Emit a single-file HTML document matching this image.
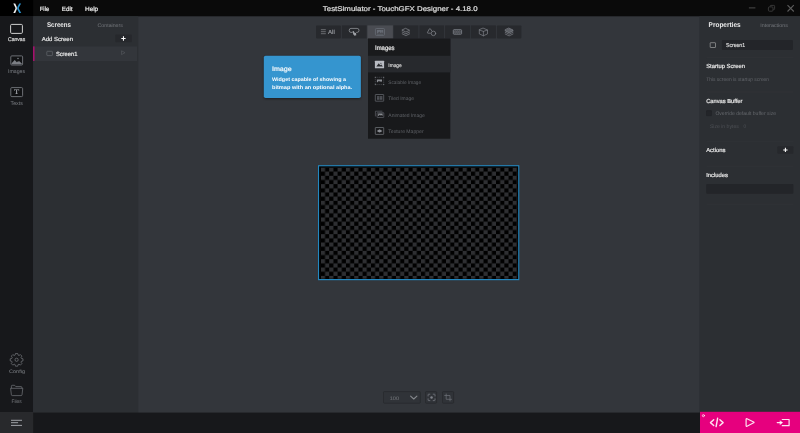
<!DOCTYPE html>
<html>
<head>
<meta charset="utf-8">
<title>TestSimulator - TouchGFX Designer - 4.18.0</title>
<style>
html,body{margin:0;padding:0;background:#33363b;}
body{width:800px;height:433px;overflow:hidden;position:relative;}
svg{position:absolute;left:0;top:0;display:block;opacity:0.999;}
text{font-family:"Liberation Sans",sans-serif;text-rendering:geometricPrecision;}
.b{font-weight:bold;}
</style>
</head>
<body>
<svg width="800" height="433" viewBox="0 0 800 433">
<defs>
<pattern id="chk" patternUnits="userSpaceOnUse" x="320.88" y="167.45" width="8.34" height="8.34">
<rect x="0" y="0" width="8.34" height="8.34" fill="#000"/>
<rect x="0" y="0" width="4.17" height="4.17" fill="#2e2f32"/>
<rect x="4.17" y="4.17" width="4.17" height="4.17" fill="#2e2f32"/>
</pattern>
<filter id="sh" x="-10%" y="-20%" width="120%" height="150%"><feGaussianBlur stdDeviation="1.2"/></filter>
</defs>

<!-- ===== base panels ===== -->
<g id="panels">
<rect x="0" y="0" width="800" height="433" fill="#33363b"/>
<rect x="0" y="0" width="800" height="16.3" fill="#0a0a0a"/>
<rect x="0" y="0" width="33.2" height="16.3" fill="#000"/>
<rect x="0" y="16.3" width="33.2" height="397" fill="#17181b"/>
<rect x="33.2" y="16.3" width="105.1" height="397" fill="#2c2f33"/>
<rect x="699.35" y="16.3" width="100.65" height="397" fill="#2c2f33"/>
<rect x="0" y="412.6" width="800" height="20.4" fill="#17181b"/>
<rect x="0" y="412" width="33.2" height="21" fill="#28292c"/>
<rect x="700" y="411.8" width="100" height="21.2" fill="#e6007e"/>
</g>

<!-- SECTION: titlebar -->
<g id="titlebar">
<path d="M13.3 3.5 L15.2 3.5 L16.6 6.6 Q16.9 7.4 16.9 8.2 Q16.9 9 16.6 9.8 L15.2 12.9 L13.3 12.9 L15.3 8.9 Q15.6 8.2 15.3 7.5 Z" fill="#f2f2f2"/>
<path d="M19.2 3.5 L21.1 3.5 L18.9 7.6 Q18.6 8.2 18.9 8.8 L21.2 12.9 L19.3 12.9 L17.3 9.2 Q16.8 8.2 17.3 7.2 Z" fill="#2b93cf"/>
<text stroke="#e4e4e4" stroke-width="0.22" x="39.8" y="10.75" font-size="6.2" fill="#e4e4e4" textLength="9.4" lengthAdjust="spacingAndGlyphs">File</text>
<text stroke="#e4e4e4" stroke-width="0.22" x="61.8" y="10.75" font-size="6.2" fill="#e4e4e4" textLength="10.7" lengthAdjust="spacingAndGlyphs">Edit</text>
<text stroke="#e4e4e4" stroke-width="0.22" x="85" y="10.75" font-size="6.2" fill="#e4e4e4" textLength="13.2" lengthAdjust="spacingAndGlyphs">Help</text>
<text stroke="#dcdcdc" stroke-width="0.22" x="322.8" y="11.05" font-size="6.9" fill="#dcdcdc" textLength="154.8" lengthAdjust="spacingAndGlyphs">TestSimulator - TouchGFX Designer - 4.18.0</text>
<path d="M748.9 7.9 H755.4" stroke="#4c4c4c" stroke-width="1" fill="none"/>
<rect x="768.4" y="6.9" width="4.6" height="4.3" rx="1" fill="none" stroke="#3e3e3e" stroke-width="0.85"/>
<path d="M770.2 6.7 V6.2 Q770.2 5.4 771 5.4 H773.8 Q774.6 5.4 774.6 6.2 V8.8 Q774.6 9.6 773.8 9.6 H773.3" fill="none" stroke="#3e3e3e" stroke-width="0.85"/>
<path d="M787.5 5.2 L793.8 11.5 M793.8 5.2 L787.5 11.5" stroke="#5c5c5c" stroke-width="1.1" fill="none"/>
</g>
<!-- SECTION: sidebar -->
<g id="sidebar">
<rect x="10.6" y="24.4" width="11.8" height="9" rx="1.1" fill="none" stroke="#cfcfcf" stroke-width="1"/>
<text stroke="#d4d4d4" stroke-width="0.22" x="8.1" y="40.9" font-size="5.4" fill="#d4d4d4" textLength="17.1" lengthAdjust="spacingAndGlyphs">Canvas</text>

<rect x="10.8" y="55.9" width="11.8" height="9.1" rx="1" fill="#111214" stroke="#7b7e84" stroke-width="0.85"/>
<path d="M11.6 64.2 L11.6 63.2 L14.7 59.9 L16.9 62.3 L17.6 61.6 L19.4 61.2 L21.8 63.4 L21.8 64.2 Z" fill="#7b7e84"/>
<circle cx="18" cy="58.5" r="0.8" fill="#7b7e84"/>
<text x="8" y="72.8" font-size="5.4" fill="#7b7e84" textLength="17" lengthAdjust="spacingAndGlyphs">Images</text>

<rect x="10.8" y="87.6" width="11.8" height="9" rx="1" fill="#111214" stroke="#7b7e84" stroke-width="0.85"/>
<text x="14.1" y="94.25" font-size="6.8" fill="#a4a7ac" stroke="#a4a7ac" stroke-width="0.15" style="font-family:'Liberation Serif',serif" textLength="5.2" lengthAdjust="spacingAndGlyphs">T</text>
<text x="10.5" y="104.8" font-size="5.4" fill="#7b7e84" textLength="12.4" lengthAdjust="spacingAndGlyphs">Texts</text>

<g fill="none" stroke="#85888d" stroke-width="0.6">
<circle cx="16.6" cy="359.8" r="1.6"/>
<path id="gear" d="M15.5 353.5 L17.7 353.5 L18.1 355.1 L19 355.5 L20.4 354.6 L21.9 356.1 L21 357.5 L21.4 358.4 L23 358.8 L23 360.9 L21.4 361.3 L21 362.2 L21.9 363.6 L20.4 365.1 L19 364.2 L18.1 364.6 L17.7 366.2 L15.5 366.2 L15.1 364.6 L14.2 364.2 L12.8 365.1 L11.3 363.6 L12.2 362.2 L11.8 361.3 L10.2 360.9 L10.2 358.8 L11.8 358.4 L12.2 357.5 L11.3 356.1 L12.8 354.6 L14.2 355.5 L15.1 355.100 Z" stroke-linejoin="round"/>
</g>
<text x="9" y="373.4" font-size="5" fill="#7e8186" textLength="16" lengthAdjust="spacingAndGlyphs">Config</text>

<g fill="none" stroke="#85888d" stroke-width="0.6" stroke-linejoin="round">
<path d="M11.4 388.3 V386.2 Q11.4 385.3 12.3 385.3 H14.6 L15.8 386.6 H21 Q21.9 386.6 21.9 387.5 V388.3"/>
<path d="M10.6 388.3 H22.8 L22 394.8 Q21.9 395.6 21 395.6 H12.4 Q11.5 395.6 11.4 394.8 Z"/>
</g>
<text x="11.4" y="402.7" font-size="5" fill="#7e8186" textLength="10.4" lengthAdjust="spacingAndGlyphs">Files</text>

<path d="M11 420.3 H22 M11 422.7 H18.1 M11 425.4 H22" stroke="#a0a3a8" stroke-width="1" fill="none"/>
</g>
<!-- SECTION: screens -->
<g id="screens">
<text class="b" x="47" y="27" font-size="6.9" fill="#ececec" textLength="24" lengthAdjust="spacingAndGlyphs">Screens</text>
<text x="97.6" y="26.7" font-size="5.2" fill="#74777c" textLength="25.3" lengthAdjust="spacingAndGlyphs">Containers</text>
<text stroke="#e2e2e2" stroke-width="0.22" x="41.8" y="41" font-size="5.8" fill="#e2e2e2" textLength="31.2" lengthAdjust="spacingAndGlyphs">Add Screen</text>
<rect x="115.3" y="34.4" width="16.5" height="7.9" rx="1" fill="#26282c"/>
<path d="M123.450 36.350 V40.650 M121.300 38.500 H125.600" stroke="#fff" stroke-width="1.05" fill="none"/>
<rect x="33.2" y="46.4" width="103.9" height="14.6" fill="#33363b"/>
<rect x="33.2" y="46.4" width="1.25" height="14.6" fill="#c3087a"/>
<rect x="46.8" y="51.3" width="5.6" height="4.3" rx="0.6" fill="none" stroke="#72757b" stroke-width="0.55"/>
<text stroke="#e4e4e4" stroke-width="0.22" x="55.9" y="55.5" font-size="6" fill="#e4e4e4" textLength="21.5" lengthAdjust="spacingAndGlyphs">Screen1</text>
<path d="M121.5 50.8 L125 52.7 L121.5 54.6 Z" fill="none" stroke="#585b61" stroke-width="0.55" stroke-linejoin="round"/>
</g>
<!-- SECTION: toolbar -->
<g id="toolbar">
<rect x="316" y="25.4" width="24.9" height="13" rx="0.8" fill="#27292d"/>
<rect x="341.9" y="25.4" width="24.7" height="13" fill="#27292d"/>
<rect x="367.4" y="25.4" width="25.5" height="13.3" fill="#4a4c52"/>
<rect x="393.6" y="25.4" width="24.8" height="13" fill="#27292d"/>
<rect x="419.4" y="25.4" width="24.7" height="13" fill="#27292d"/>
<rect x="445.1" y="25.4" width="25.1" height="13" fill="#27292d"/>
<rect x="471" y="25.4" width="24.9" height="13" fill="#27292d"/>
<rect x="496.9" y="25.4" width="24.5" height="13" rx="0.8" fill="#27292d"/>
<!-- all -->
<path d="M320.9 29.7 H325.8 M320.9 31.7 H325.8 M320.9 33.7 H325.8" stroke="#808388" stroke-width="0.75" fill="none"/>
<text stroke="#8e9196" stroke-width="0.22" x="328" y="33.9" font-size="5.8" fill="#8e9196" textLength="6.8" lengthAdjust="spacingAndGlyphs">All</text>
<!-- interaction -->
<g fill="none" stroke="#9da0a5" stroke-width="0.7" stroke-linecap="round">
<path d="M352.2 32.4 H351 Q349.2 32.4 349.2 30.4 Q349.2 28.4 351 28.4 H357.2 Q359 28.4 359 30.4 Q359 32.4 357.2 32.4 H356.6"/>
</g>
<path d="M352.6 31.1 L353.6 30.9 L354.6 32.7 L356 33.1 L356.3 35.2 L354.5 35.7 L353.2 34.3 Z" fill="#9da0a5"/>
<!-- image (selected) -->
<rect x="375.4" y="28.5" width="9.1" height="6.9" rx="1" fill="none" stroke="#676c75" stroke-width="0.8"/>
<path d="M377 29.900 H383.200 V33.400 L381.900 32.100 L380.800 33.200 L379.300 31.400 L377.400 33.400 H377 Z" fill="#676c75"/>
<circle cx="381.700" cy="30.900" r="0.45" fill="#4a4c52"/>
<path d="M377 34.300 H383.200" stroke="#676c75" stroke-width="0.5"/>
<!-- layers -->
<g fill="none" stroke="#80838a" stroke-width="0.75" stroke-linejoin="round" stroke-linecap="round">
<path d="M405.900 28.500 L409.600 30.250 L405.900 32 L402.200 30.250 Z"/>
<path d="M402.200 32 L405.900 33.800 L409.600 32"/>
<path d="M402.200 33.800 L405.900 35.600 L409.600 33.800"/>
</g>
<!-- shapes -->
<g fill="none" stroke="#80838a" stroke-width="0.75" stroke-linejoin="round" stroke-linecap="round">
<path d="M431.700 30.800 L430.400 28.800 Q429.900 28.200 429.400 28.900 L427.500 32.300 Q427.100 33.200 428 33.200 L430.400 33.200"/>
<circle cx="433.450" cy="33.400" r="2.250"/>
</g>
<!-- digital clock -->
<rect x="453.300" y="29.700" width="8.300" height="4.500" rx="0.7" fill="#3a3c41" stroke="#80838a" stroke-width="0.85"/>
<g fill="none" stroke="#80838a" stroke-width="0.45">
<rect x="454.700" y="30.900" width="1.300" height="2.100" rx="0.4"/><rect x="456.800" y="30.900" width="1.300" height="2.100" rx="0.4"/><rect x="458.900" y="30.900" width="1.300" height="2.100" rx="0.4"/>
</g>
<!-- cube -->
<g fill="none" stroke="#80838a" stroke-width="0.7" stroke-linejoin="round" stroke-linecap="round">
<path d="M483.400 28.200 L487.500 30 V33.900 L483.400 35.800 L479.300 33.900 V30 Z"/>
<path d="M479.300 30 L483.400 31.400 L487.500 30 M483.400 31.400 V35.800"/>
</g>
<!-- stack -->
<g fill="none" stroke="#80838a" stroke-width="0.7" stroke-linejoin="round" stroke-linecap="round">
<path d="M509.100 28.200 L513 30 L513 30.900 L509.100 32.800 L505.200 30.900 L505.200 30 Z" fill="#5d6066"/>
<path d="M505.200 32.300 L509.100 34.200 L513 32.300"/>
<path d="M505.200 34 L509.100 35.900 L513 34"/>
</g>
</g>
<!-- SECTION: dropdown -->
<g id="dropdown">
<rect x="368" y="38.7" width="82.3" height="100" fill="#18191b"/>
<rect x="368" y="38.7" width="82.3" height="17" fill="#191a1c"/>
<rect x="368" y="55.7" width="82.3" height="16.7" fill="#27292d"/>
<text stroke="#e6e6e6" stroke-width="0.22" x="375" y="50" font-size="6.4" fill="#e6e6e6" textLength="19.5" lengthAdjust="spacingAndGlyphs">Images</text>
<!-- row 1: Image -->
<rect x="374.9" y="60.8" width="9.2" height="7.4" rx="0.5" fill="#b9bcc3"/>
<path d="M376.300 66.500 L378.800 63.300 L380.200 65.200 L381.250 64.500 L382.900 66.500 Z" fill="#27292d"/>
<circle cx="380.900" cy="63.200" r="0.55" fill="#27292d"/>
<text stroke="#c6c6c6" stroke-width="0.22" x="388.3" y="66.9" font-size="5" fill="#c6c6c6" textLength="13.4" lengthAdjust="spacingAndGlyphs">Image</text>
<!-- row 2: Scalable Image -->
<rect x="375.3" y="77.3" width="8.4" height="7.300" fill="none" stroke="#55585e" stroke-width="0.6" stroke-dasharray="1.2 0.7"/>
<g fill="#6a6d72"><rect x="374.800" y="76.800" width="1.100" height="1.100"/><rect x="383.100" y="76.800" width="1.100" height="1.100"/><rect x="374.800" y="84" width="1.100" height="1.100"/><rect x="383.100" y="84" width="1.100" height="1.100"/></g>
<path d="M376.900 79.600 H382 V82.200 L381 81.100 L380.100 81.900 L379 80.700 L377.600 82.200 H376.900 Z" fill="#8a8d93"/>
<text x="388.3" y="83.6" font-size="5" fill="#5f6267" textLength="32.8" lengthAdjust="spacingAndGlyphs">Scalable Image</text>
<!-- row 3: Tiled Image -->
<rect x="375.3" y="94.5" width="8.4" height="6.700" rx="0.3" fill="none" stroke="#5f6268" stroke-width="0.8"/>
<g fill="#55585e"><rect x="377" y="96.200" width="2.500" height="1.600"/><rect x="379.900" y="96.200" width="2.500" height="1.600"/><rect x="377" y="98.100" width="2.500" height="1.600"/><rect x="379.900" y="98.100" width="2.500" height="1.600"/></g>
<text x="388.3" y="100.1" font-size="5" fill="#5f6267" textLength="25.6" lengthAdjust="spacingAndGlyphs">Tiled Image</text>
<!-- row 4: Animated Image -->
<g fill="none" stroke="#5f6268" stroke-width="0.7">
<path d="M375.400 116.400 V111.200 H382.400"/>
<rect x="377.100" y="112.700" width="6.700" height="4.800" rx="0.3"/>
</g>
<path d="M378.200 113.500 H382.600 V116 L381.700 115 L380.900 115.700 L379.900 114.600 L378.700 116 H378.200 Z" fill="#8a8d93"/>
<text x="388.3" y="116.8" font-size="5" fill="#5f6267" textLength="36.500" lengthAdjust="spacingAndGlyphs">Animated Image</text>
<!-- row 5: Texture Mapper -->
<rect x="375.3" y="127.500" width="8.400" height="6.900" rx="0.3" fill="none" stroke="#6a6d72" stroke-width="0.8"/>
<path d="M376.800 130.900 L378.400 129.900 L379.600 129.300 L380.800 129.900 L382.400 130.900 L380.800 131.900 L379.600 132.500 L378.400 131.900 Z" fill="#8a8d93"/>
<text x="388.3" y="133.4" font-size="5" fill="#5f6267" textLength="35.300" lengthAdjust="spacingAndGlyphs">Texture Mapper</text>
</g>
<!-- SECTION: tooltip -->
<g id="tooltip">
<rect x="263.8" y="56.6" width="97.1" height="42.3" rx="2" fill="#000" opacity="0.45" filter="url(#sh)"/>
<rect x="263.8" y="55.8" width="97.1" height="42.3" rx="1.8" fill="#3595cf"/>
<text stroke="#f4f8fb" stroke-width="0.22" x="272" y="70.9" font-size="6.5" fill="#f4f8fb" textLength="19.700" lengthAdjust="spacingAndGlyphs">Image</text>
<text class="b" x="272" y="81.4" font-size="5.2" fill="#fafcfe" textLength="74" lengthAdjust="spacingAndGlyphs">Widget capable of showing a</text>
<text class="b" x="272" y="88.8" font-size="5.2" fill="#fafcfe" textLength="80.200" lengthAdjust="spacingAndGlyphs">bitmap with an optional alpha.</text>
</g>
<!-- SECTION: canvas -->
<g id="canvas">
<rect x="318" y="165.200" width="201.300" height="115" fill="#2288c0"/>
<rect x="319.100" y="166.300" width="199.100" height="112.700" fill="#000"/>
<rect x="320.88" y="167.45" width="196.4" height="111.2" fill="url(#chk)"/>
</g>
<!-- SECTION: zoomctl -->
<g id="zoomctl">
<rect x="383.500" y="391.600" width="36.800" height="11.600" rx="0.8" fill="#303338" stroke="#27292d" stroke-width="0.8"/>
<rect x="425.500" y="391.600" width="11.100" height="11.600" rx="0.8" fill="#303338" stroke="#27292d" stroke-width="0.8"/>
<rect x="442.500" y="391.600" width="11.100" height="11.600" rx="0.8" fill="#303338" stroke="#27292d" stroke-width="0.8"/>
<text x="389.800" y="399.750" font-size="5.1" fill="#686b70" stroke="#686b70" stroke-width="0.12" textLength="9.200" lengthAdjust="spacingAndGlyphs">100</text>
<path d="M410.600 396.100 L413.750 399 L416.900 396.100" fill="none" stroke="#85888d" stroke-width="1.1" stroke-linecap="round" stroke-linejoin="round"/>
<g fill="none" stroke="#80838a" stroke-width="0.7" stroke-linecap="round" stroke-linejoin="round">
<path d="M428.100 396 V394.800 Q428.100 394.200 428.700 394.200 H429.900 M433.200 394.200 H434.400 Q435 394.200 435 394.800 V396 M435 398.800 V400 Q435 400.600 434.400 400.600 H433.200 M429.900 400.600 H428.700 Q428.100 400.600 428.100 400 V398.800"/>
</g>
<circle cx="431.550" cy="397.400" r="1.250" fill="#80838a"/>
<g fill="none" stroke="#70737a" stroke-width="0.7" stroke-linecap="round" stroke-linejoin="round">
<path d="M446.200 394 V399.300 H451.600"/>
<path d="M444.700 395.500 H450 V400.900"/>
</g>
</g>
<!-- SECTION: props -->
<g id="props">
<text class="b" x="708.600" y="27.100" font-size="6.9" fill="#ececec" textLength="32" lengthAdjust="spacingAndGlyphs">Properties</text>
<text x="760.200" y="26.700" font-size="5.2" fill="#74777c" textLength="27.700" lengthAdjust="spacingAndGlyphs">Interactions</text>
<rect x="710.200" y="42.700" width="5.300" height="4.800" rx="0.4" fill="none" stroke="#b4b4b4" stroke-width="0.6"/>
<rect x="721.900" y="40.100" width="71" height="9.900" rx="1" fill="#232529"/>
<text stroke="#d6d6d6" stroke-width="0.22" x="726" y="47.300" font-size="5.700" fill="#d6d6d6" textLength="19" lengthAdjust="spacingAndGlyphs">Screen1</text>
<path d="M706.500 57.700 H793.400" stroke="#34373b" stroke-width="0.5"/>
<text stroke="#e4e4e4" stroke-width="0.22" x="706.200" y="68.100" font-size="5.800" fill="#e4e4e4" textLength="38.800" lengthAdjust="spacingAndGlyphs">Startup Screen</text>
<text x="706.200" y="80.750" font-size="5.200" fill="#62656a" textLength="62.900" lengthAdjust="spacingAndGlyphs">This screen is startup screen</text>
<path d="M706.500 92 H793.400" stroke="#34373b" stroke-width="0.5"/>
<text stroke="#e4e4e4" stroke-width="0.22" x="706.200" y="102.800" font-size="5.800" fill="#e4e4e4" textLength="36.300" lengthAdjust="spacingAndGlyphs">Canvas Buffer</text>
<rect x="706.500" y="110.600" width="5" height="5" rx="0.4" fill="#232529" stroke="#1f2124" stroke-width="0.5"/>
<text x="715.400" y="115.100" font-size="5.200" fill="#64676c" textLength="60.600" lengthAdjust="spacingAndGlyphs">Override default buffer size</text>
<text x="709.900" y="127.500" font-size="5.200" fill="#4e5156" textLength="28.900" lengthAdjust="spacingAndGlyphs">Size in bytes</text>
<text x="743.400" y="127.500" font-size="5.200" fill="#4e5156" textLength="2.600" lengthAdjust="spacingAndGlyphs">0</text>
<path d="M706.500 141.300 H793.400" stroke="#34373b" stroke-width="0.5"/>
<text stroke="#e4e4e4" stroke-width="0.22" x="706.200" y="151.700" font-size="5.800" fill="#e4e4e4" textLength="19.200" lengthAdjust="spacingAndGlyphs">Actions</text>
<rect x="777.300" y="146.200" width="16.100" height="7.600" rx="1" fill="#26282c"/>
<path d="M785.400 147.800 V152.100 M783.250 149.950 H787.550" stroke="#fff" stroke-width="1.05" fill="none"/>
<path d="M706.500 166.100 H793.400" stroke="#34373b" stroke-width="0.5"/>
<text stroke="#e4e4e4" stroke-width="0.22" x="706.200" y="176.700" font-size="5.800" fill="#e4e4e4" textLength="21.600" lengthAdjust="spacingAndGlyphs">Includes</text>
<rect x="706.200" y="184" width="87.200" height="9.700" rx="1" fill="#232529"/>
<path d="M706.500 204.100 H793.400" stroke="#34373b" stroke-width="0.5"/>
</g>
<!-- SECTION: pink -->
<g id="pink" fill="none" stroke="#fde2f0" stroke-linecap="round" stroke-linejoin="round">
<circle cx="703.400" cy="415.650" r="1.05" stroke="#fff" stroke-width="0.7"/>
<path d="M713.700 419.700 L710.500 422.600 L713.700 425.500 M719.900 419.700 L723.100 422.600 L719.900 425.500 M717.600 418.300 L716.100 426.600" stroke-width="1.45"/>
<path d="M746.100 419.300 Q746.100 418.300 747 418.700 L753.700 422 Q754.400 422.400 753.700 422.800 L747 426.200 Q746.100 426.600 746.100 425.600 Z" stroke-width="1.2"/>
<path d="M781.800 419.500 H789.100 V425.700 H781.800" stroke-width="1.2" stroke-linecap="butt"/>
<path d="M777.200 422.600 H781" stroke-width="1.1"/>
<path d="M780.200 420.900 L782.700 422.600 L780.200 424.400 Z" fill="#fff" stroke="#fff" stroke-width="0.4"/>
</g>
</svg>
</body>
</html>
